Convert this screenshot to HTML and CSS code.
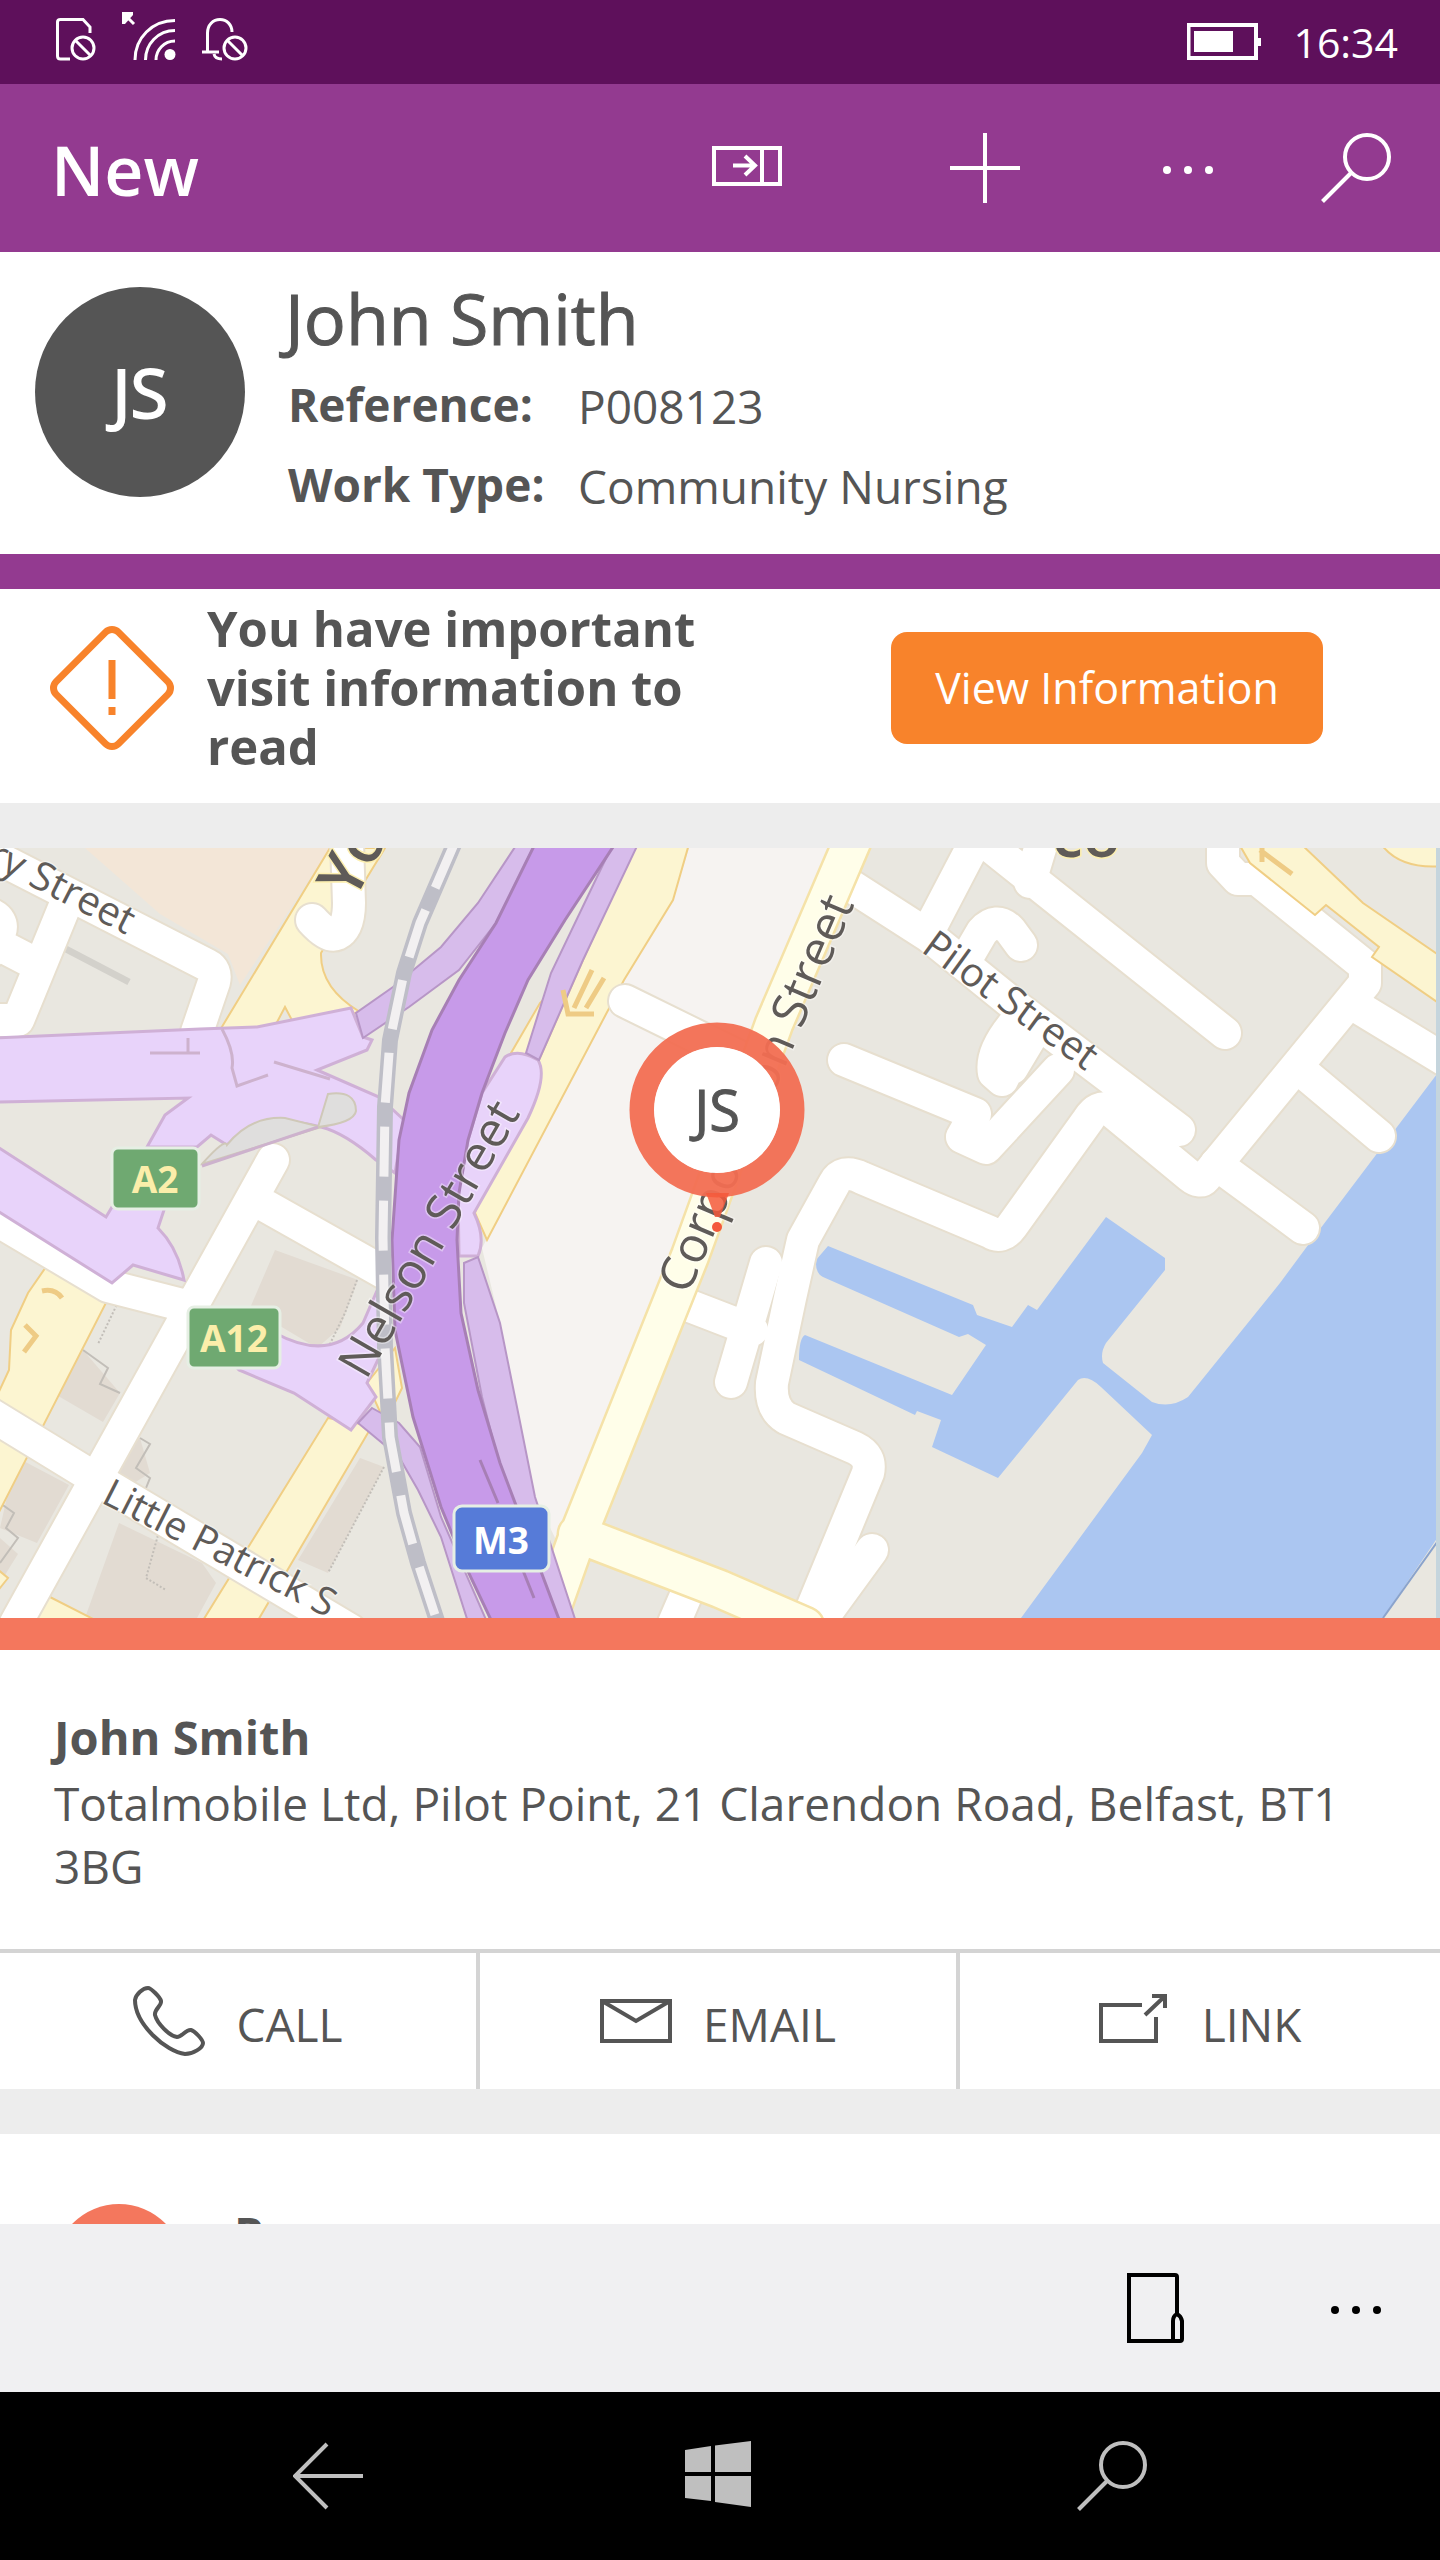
FILE: index.html
```html
<!DOCTYPE html>
<html lang="en">
<head>
<meta charset="UTF-8">
<meta name="viewport" content="width=device-width, initial-scale=1.0">
<link rel="stylesheet" href="styles.css">
<title>New</title>
</head>
<body>
<div class="status-bar">
  <div class="status-icons">
    <svg width="40" height="50" viewBox="0 0 40 50">
      <path class="line" d="M14 43H4.500Q1.500 43 1.500 40V6Q1.500 3.500 4.500 3.500H27L34 11V17"/>
      <circle class="line" cx="27" cy="32" r="11"/>
      <path class="line" d="M19 24L35 40"/>
    </svg>
    <svg width="54" height="50" viewBox="0 0 54 50">
      <path class="line" d="M2 -2L12 8" stroke-width="4"/>
      <path class="solid" d="M0 -4H11V-1L3 8H0Z"/>
      <path class="line" d="M13 44C13 22 30 4.500 53 4.500M23.500 44C23.500 28 36 14.500 53 14.500M34 44C34 34 42 25 53 25"/>
      <circle class="solid" cx="48" cy="38.500" r="5.500"/>
    </svg>
    <svg width="48" height="50" viewBox="0 0 48 50">
      <path class="line" d="M5.500 36V17C5.500 9 11 3.500 18 3.500C25 3.500 30 9 30 16M0 36H17M12 38Q13 43 20 43"/>
      <circle class="line" cx="33" cy="32" r="11"/>
      <path class="line" d="M25 24L41 40"/>
    </svg>
  </div>
  <div class="status-right">
    <svg width="74" height="38" viewBox="0 0 74 38">
      <path class="line" d="M1.500 2H69V35H1.500Z"/>
      <path class="solid" d="M7 8H46V29H7ZM70 15H74V23H70Z"/>
    </svg>
    <span class="clock">16:34</span>
  </div>
</div>

<header class="app-bar">
  <h1>New</h1>
  <div class="app-actions">
    <button type="button" aria-label="Open pane">
      <svg width="70" height="70" viewBox="0 0 70 70">
        <path class="line" d="M2 15H68V51H2ZM50 15V51M21 32.500H43M33 23L43 32.500L33 42"/>
      </svg>
    </button>
    <button type="button" aria-label="Add">
      <svg width="70" height="70" viewBox="0 0 70 70"><path class="line" d="M35 0V70M0 35H70"/></svg>
    </button>
    <button type="button" aria-label="More">
      <svg width="50" height="70" viewBox="0 0 50 70">
        <circle class="solid" cx="4" cy="37" r="4"/><circle class="solid" cx="25" cy="37" r="4"/><circle class="solid" cx="46" cy="37" r="4"/>
      </svg>
    </button>
    <button type="button" aria-label="Search">
      <svg width="70" height="70" viewBox="0 0 70 70"><circle class="line" cx="46" cy="24" r="22"/><path class="line" d="M30 40L1.500 68.500"/></svg>
    </button>
  </div>
</header>

<main class="content">
  <section class="profile">
    <div class="avatar">JS</div>
    <div class="profile-info">
      <h2>John Smith</h2>
      <dl>
        <dt>Reference:</dt><dd>P008123</dd>
        <dt>Work Type:</dt><dd>Community Nursing</dd>
      </dl>
    </div>
  </section>

  <section class="alert">
    <svg class="alert-icon" width="128" height="128" viewBox="0 0 128 128">
      <rect x="20" y="20" width="88" height="88" rx="9" transform="rotate(45 64 64)"/>
      <path d="M64 36V75M64 83V91"/>
    </svg>
    <p>You have important visit information to read</p>
    <button type="button" class="view-button">View Information</button>
  </section>

  <section class="map">
    <svg viewBox="0 0 1440 770" role="img" aria-label="Map">
      <defs>
        <g id="roads">
          <path d="M-10 6L207 117Q217 122 214 134L197 184"/>
          <path d="M64 60L18 172H-10M-10 66Q4 72 0 84L-10 104M40 118L-10 92"/>
          <path d="M-10 368L108 438L186 458M273 312L16 775M255 352L390 428M-10 566L88 626L350 782"/>
          <path d="M625 153L745 212"/>
          <path d="M848 36L929 88L1018 160L1179 282M975 -6L928 84M985 -6L1225 185M1042 -6L1030 34"/>
          <path d="M968 108L982 84Q996 68 1010 82L1021 97M1014 176Q990 205 994 225L1002 232L1016 204M1030 190L1012 220M1058 222L986 300L962 289L975 266L844 212"/>
          <path d="M1223 -6V15L1238 31H1257L1365 118V135L1205 330Q1200 336 1190 328L1110 262Q1098 256 1088 272L1012 378Q1002 392 990 384L862 330Q842 320 834 336L803 392L790 450L772 535Q770 560 786 570L855 600Q872 608 868 625L806 775"/>
          <path d="M1216 316L1303 380M1298 220L1379 288M1356 158L1445 212"/>
          <path d="M766 415L731 534M682 455L752 482M872 702L824 768M687 745L674 775"/>
        </g>
        <path id="corporation" d="M852 -6L774 176L690 408L577 690L545 780M577 686L720 741L805 778"/>
      </defs>

      <rect class="land" width="1440" height="770"/>
      <path class="peach" d="M85 0H330L240 137L228 106L160 66Z"/>
      <path class="pale" d="M689 0H840L765 172L685 400L580 675L560 700L535 649L519 569L500 475L482 400L624 132L673 52Z"/>
      <path class="building" d="M275 402L358 432L340 480L317 500L250 460ZM83 502L120 545L103 574L53 545ZM360 610L384 619L328 725L298 712ZM119 675L202 715L216 735L197 770H85ZM16 609L69 637L37 695L0 680ZM140 590L150 625L110 650L125 600ZM0 690L18 706L0 735Z"/>
      <path class="outline" d="M83 502L108 520L100 536L120 545M140 590L150 596L136 620L150 630L146 640M0 655L14 665L6 680L18 690L0 715"/>
      <path class="outline dotted" d="M384 619L328 725M357 432L345 465L328 500M120 450L98 496M160 680L146 730L166 742"/>
      <path class="water" d="M1440 222L1317 385L1280 435L1188 549Q1170 561 1152 554L1103 515Q1100 505 1106 495L1165 422V410L1106 369L1037 462L1028 457L1012 479L977 467L973 457L828 398L816 412Q815 425 823 429L959 489L968 486L986 497L952 547L805 487Q799 490 799 512L915 567L917 563L941 572L932 599L998 630L1078 532Q1087 526 1101 539L1152 587L1142 605L1021 770H1383L1440 686Z"/>
      <path class="shore" d="M1440 690L1383 770"/>
      <path class="mark" d="M64 100L129 134"/>

      <!-- main roads -->
      <g class="yellow">
        <path d="M330 0L220 182L275 178L285 159L294 176L360 164Q320 140 321 105L385 0Z"/>
        <path d="M636 -4L583 112L539 212L505 225L475 365L487 392L624 132L673 52L689 -4ZM511 205L540 155L545 150L526 208Z"/>
        <path d="M48 416L110 447L-4 670V550L9 522L11 482L28 445ZM328 570L372 578L257 774H202ZM46 747L99 774H32ZM-4 720L8 730L-4 745Z"/>
        <path d="M367 535L395 500L402 540L385 575Z"/>
        <path d="M1381 -4Q1400 22 1444 18V-4Z"/>
      </g>
      <use href="#roads" class="casing"/>
      <use href="#roads" class="road"/>
      <path class="yellow" d="M1239 -4H1301L1363 55L1440 108V156L1372 109L1379 99L1326 57L1315 67L1250 15Z"/>
      <use href="#corporation" class="corp-casing"/>
      <use href="#corporation" class="corp"/>
      <path class="casing" d="M347 -6L349 55Q349 80 337 86Q328 90 312 72"/>
      <path class="road" d="M347 -6L349 55Q349 80 337 86Q328 90 312 72"/>

      <g class="lilac">
        <path d="M-4 190L200 181L257 179L351 160L363 189L372 192L367 202L317 222L379 249L404 272L395 325L376 312Q345 285 321 279Q260 262 227 297L211 287L197 299H147L165 267L188 250L-4 254Z"/>
        <path d="M-4 298L106 369L112 359H165L158 380Q178 400 184 432L133 417L112 435L-4 362Z"/>
        <path d="M239 460L275 485Q330 515 363 475L376 445L392 482L367 535L376 549L351 582L294 545L239 522L200 480Z"/>
        <path d="M505 209Q518 200 538 212Q548 228 528 270L474 365Q486 390 478 408H459L458 345L468 292L482 245Z"/>
      </g>
      <path class="island" d="M328 246Q356 242 356 263Q354 275 318 279ZM321 279L202 316Q225 290 227 297Q250 268 285 270Z"/>
      <path class="lilac-edge" d="M150 205H200M188 205V190M222 181Q235 205 232 220L237 238L268 227M274 214L330 231M202 318L318 279"/>
      <g class="ramp">
        <path d="M517 -4H535L496 75L459 122L409 159L363 190L356 165L393 139L441 99L478 55Z"/>
        <path d="M613 -4H638L583 112L539 212L526 205L551 125L597 29Z"/>
        <path d="M464 415L478 409L500 475L519 569L535 649L576 774H558L505 639L482 549L464 455Z"/>
        <path d="M372 560L399 575L420 599L441 669L487 774H468L441 689L418 642L399 609L358 575Z"/>
      </g>
      <path class="motorway" d="M535 -4L496 75L459 132L432 182L409 245L399 292L392 392L395 482L413 569L441 659L464 715L492 774H560L528 689L500 615L478 542L461 465L457 392L459 345L468 292L482 245L505 185L528 132L565 72L615 -4Z"/>
      <path class="motorway" d="M480 612L498 655M522 720L534 750"/>
      <path class="arrow" d="M563 142L568 166L594 166M592 122L574 160M604 130L586 160M1260 2L1292 26M1262 0V14M42 443Q55 440 62 450M25 477L36 488L24 504"/>
      <path class="rail" d="M455 -6L420 75L404 125L390 192L385 259L383 390L385 499L390 589L404 665L418 715L438 776"/>
      <path class="rail-dash" d="M455 -6L420 75L404 125L390 192L385 259L383 390L385 499L390 589L404 665L418 715L438 776"/>
      <rect class="map-edge" x="1436" width="4" height="770"/>

      <g class="label">
        <text class="label-town" transform="translate(354 54) rotate(-62)">Yo</text>
        <text class="label-town" x="1052" y="9">co</text>
        <text transform="translate(-15 15) rotate(27)">ry Street</text>
        <text transform="translate(920 103) rotate(36)">Pilot Street</text>
        <text class="label-small" transform="translate(100 654) rotate(27)">Little Patrick S</text>
        <text class="label-large" transform="translate(366 533) rotate(-60)">Nelson Street</text>
        <text class="label-large" transform="translate(688 448) rotate(-67)">Corporation Street</text>
      </g>

      <g class="shield shield-green">
        <rect x="112" y="300" width="87" height="61" rx="6"/><text x="155" y="345">A2</text>
        <rect x="188" y="459" width="92" height="61" rx="6"/><text x="234" y="504">A12</text>
      </g>
      <g class="shield shield-blue">
        <rect x="454" y="658" width="95" height="65" rx="8"/><text x="501" y="706">M3</text>
      </g>

      <g class="pin">
        <circle class="pin-ring" cx="717" cy="262" r="75"/>
        <path class="pin-tip" d="M706 345H729L720 369H715Z"/>
        <circle cx="717" cy="379" r="5"/>
        <circle class="pin-face" cx="717" cy="262" r="63"/>
        <text x="717" y="283">JS</text>
      </g>
    </svg>
  </section>

  <section class="address">
    <h3>John Smith</h3>
    <p>Totalmobile Ltd, Pilot Point, 21 Clarendon Road, Belfast, BT1 3BG</p>
  </section>
  <nav class="contact">
    <a href="#call">
      <svg width="72" height="70" viewBox="0 0 72 70">
        <path class="line" d="M15 2C18 2 27 11 28 15C29 20 21 23 22 29C24 37 36 50 44 51C49 51 53 43 58 44C62 45 70 54 70 57C70 62 60 68 52 68C33 66 2 38 2 14C3 8 10 2 15 2Z"/>
      </svg>
      <span>CALL</span>
    </a>
    <a href="#email">
      <svg width="72" height="70" viewBox="0 0 72 70"><path class="line" d="M2 15H70V55H2ZM2 15L36 35L70 15"/></svg>
      <span>EMAIL</span>
    </a>
    <a href="#link">
      <svg width="72" height="70" viewBox="0 0 72 70"><path class="line" d="M43 19H2V55H57V31M46 29L65 11M53 10H66V22"/></svg>
      <span>LINK</span>
    </a>
  </nav>

  <section class="person">
    <span class="person-dot"></span>
    <h3>Person</h3>
  </section>
</main>

<div class="command-bar">
  <button type="button" aria-label="Notes">
    <svg width="58" height="70" viewBox="0 0 58 70">
      <path class="line" d="M50 40V4Q50 2 48 2H2V68H53Q55 68 55 66V48Q54 43 50 41Q46 43 46 48V67"/>
    </svg>
  </button>
  <button type="button" aria-label="More">
    <svg width="50" height="70" viewBox="0 0 50 70">
      <circle class="solid" cx="4" cy="37" r="4"/><circle class="solid" cx="25" cy="37" r="4"/><circle class="solid" cx="46" cy="37" r="4"/>
    </svg>
  </button>
</div>

<nav class="system-bar">
  <button type="button" aria-label="Back">
    <svg width="70" height="70" viewBox="0 0 70 70"><path class="line" d="M70 35H3M34 3L2 35L34 67"/></svg>
  </button>
  <button type="button" aria-label="Start">
    <svg width="70" height="70" viewBox="0 0 70 70"><path class="solid" d="M0 9L26 5V31H0ZM30 4.500L66 0V31H30ZM0 35H26V60L0 57ZM30 35H66V66L30 61Z"/></svg>
  </button>
  <button type="button" aria-label="Search">
    <svg width="70" height="70" viewBox="0 0 70 70"><circle class="line" cx="46" cy="24" r="22"/><path class="line" d="M30 40L1.500 68.500"/></svg>
  </button>
</nav>
</body>
</html>
```
FILE: styles.css
```css
* {
  box-sizing: border-box;
}
body {
  margin: 0;
  height: 100vh;
  display: flex;
  flex-direction: column;
  font-family: "Segoe UI", "Open Sans", sans-serif;
  font-size: 46px;
  line-height: 64px;
  color: #555555;
  background-color: #ffffff;
}
h1, h2, h3, p, dl, dd {
  margin: 0;
}
button {
  padding: 0;
  border: none;
  background: none;
  color: inherit;
  font: inherit;
  cursor: pointer;
}
svg {
  display: block;
}
.line {
  fill: none;
  stroke: currentColor;
  stroke-width: 4;
}
.solid {
  fill: currentColor;
}

/* top bars */
.status-bar {
  flex: none;
  display: flex;
  justify-content: space-between;
  align-items: center;
  height: 84px;
  padding: 0 42px 0 56px;
  color: #ffffff;
  background-color: #5e105b;
}
.status-icons {
  display: flex;
  gap: 26px;
}
.status-icons svg {
  margin-top: -2px;
  overflow: visible;
}
.status-icons .line {
  stroke-width: 3;
}
.status-right {
  display: flex;
  align-items: center;
  gap: 32px;
}
.clock {
  font-size: 41px;
}
.app-bar {
  flex: none;
  display: flex;
  justify-content: space-between;
  align-items: center;
  height: 168px;
  padding: 0 49px 0 51px;
  color: #ffffff;
  background-color: #933a90;
}
h1 {
  padding-top: 4px;
  font-size: 68px;
  font-weight: 600;
}
.app-actions {
  display: grid;
  grid-template-columns: 238px 213px 158px 70px;
}

/* profile */
.content {
  flex: 1;
  min-height: 0;
  overflow: hidden;
}
.profile {
  display: flex;
  gap: 40px;
  padding: 35px 35px 30px;
  border-bottom: 35px solid #933a90;
}
.avatar {
  flex: none;
  width: 210px;
  height: 210px;
  border-radius: 50%;
  background-color: #555555;
  color: #ffffff;
  font-size: 68px;
  line-height: 210px;
  text-align: center;
  -webkit-text-stroke: 2px;
}
h2 {
  font-size: 70px;
  font-weight: 400;
  line-height: 62px;
  -webkit-text-stroke: 1px;
}
dl {
  display: grid;
  grid-template-columns: 290px 1fr;
  padding-left: 3px;
  margin-top: 15px;
  line-height: 80px;
}
dt {
  font-size: 46px;
  font-weight: 700;
}
dd {
  padding-top: 4px;
  line-height: 76px;
}

/* alert */
.alert {
  display: flex;
  align-items: center;
  padding: 10px 117px 27px 48px;
  border-bottom: 45px solid #ededed;
}
.alert-icon {
  fill: none;
  stroke: #f8832b;
  stroke-width: 7;
}
.alert p {
  width: 520px;
  margin: 0 auto 0 31px;
  font-size: 49px;
  font-weight: 700;
  line-height: 59px;
}
.view-button {
  width: 432px;
  height: 112px;
  border-radius: 16px;
  background-color: #f8832b;
  color: #ffffff;
  font-size: 43px;
}

/* map */
.map {
  border-bottom: 32px solid #f4775d;
}
.land { fill: #e9e7e0; }
.peach { fill: #f3e6d7; }
.pale { fill: #f6f3f1; }
.building { fill: #e2dbd2; }
.water { fill: #abc6f1; }
.outline, .shore, .mark, .arrow {
  fill: none;
  stroke: #c2beb8;
  stroke-width: 2;
}
.dotted { stroke-dasharray: 2 2; }
.shore { stroke: #8aa3cc; }
.mark {
  stroke: #d3d1cb;
  stroke-width: 7;
}
.arrow {
  stroke: #eecb85;
  stroke-width: 5;
}
.yellow {
  fill: #fcf5d1;
  stroke: #f0ce84;
  stroke-width: 2;
}
.casing, .road, .corp, .corp-casing {
  fill: none;
  stroke-linecap: round;
  stroke-linejoin: round;
}
.casing {
  stroke: #e7dfcf;
  stroke-width: 36;
}
.road {
  stroke: #ffffff;
  stroke-width: 32;
}
.corp-casing {
  stroke: #f5e2a8;
  stroke-width: 41;
}
.corp {
  stroke: #fffee9;
  stroke-width: 36;
}
.lilac {
  fill: #e8d3fa;
  stroke: #cfb0d6;
  stroke-width: 3;
}
.lilac-edge {
  fill: none;
  stroke: #cdb2cd;
  stroke-width: 3;
}
.island {
  fill: #dfdedd;
  stroke: #cfc8b8;
  stroke-width: 2;
}
.ramp {
  fill: #d7bceb;
  stroke: #b796c6;
  stroke-width: 2;
}
.motorway {
  fill: #c79ae9;
  stroke: #a77fb5;
  stroke-width: 3;
}
.rail, .rail-dash {
  fill: none;
  stroke: #bebec7;
  stroke-width: 16;
}
.rail-dash {
  stroke: #f2f0f1;
  stroke-width: 9;
  stroke-dasharray: 50 24;
}
.map-edge { fill: #c5d5dd; }
.label {
  font-size: 40px;
  fill: #5f5b58;
  stroke: #ffffff;
  stroke-opacity: 0.4;
  stroke-width: 3;
  paint-order: stroke;
}
.label-small { font-size: 39px; }
.label-large { font-size: 49px; }
.label-town {
  font-size: 62px;
  font-weight: 600;
  stroke: #fcefb0;
  stroke-opacity: 1;
}
.shield {
  stroke: #e6efe4;
  stroke-width: 3;
  font-size: 37px;
  font-weight: 700;
  text-anchor: middle;
}
.shield text {
  stroke: none;
}
.shield-green rect { fill: #6fa971; }
.shield-green text { fill: #fbeeaa; }
.shield-blue rect { fill: #567bd8; }
.shield-blue text { fill: #ffffff; }
.pin {
  fill: #f4593b;
}
.pin-ring {
  fill: none;
  stroke: #f26e52;
  stroke-opacity: 0.95;
  stroke-width: 25;
}
.pin-tip { fill-opacity: 0.85; }
.pin-face { fill: #ffffff; }
.pin text {
  fill: #555555;
  stroke: #555555;
  stroke-width: 1;
  font-size: 56px;
  text-anchor: middle;
}

/* address and contact */
.address {
  padding: 52px 54px 51px;
}
h3 {
  font-size: 47px;
  font-weight: 700;
}
.address h3 {
  line-height: 70px;
}
.address p {
  line-height: 63px;
}
.contact {
  display: grid;
  grid-template-columns: 1fr 1fr 1fr;
  border-top: 4px solid #d4d4d4;
  border-bottom: 45px solid #ededed;
}
.contact a {
  display: flex;
  justify-content: center;
  align-items: center;
  gap: 31px;
  height: 136px;
  color: #555555;
  text-decoration: none;
}
.contact a:not(:last-child) {
  border-right: 4px solid #d4d4d4;
}
.contact span {
  padding-top: 6px;
}
.person {
  display: flex;
  gap: 50px;
  padding: 70px 54px;
}
.person h3 {
  line-height: 58px;
}
.person-dot {
  width: 130px;
  height: 130px;
  border-radius: 50%;
  background-color: #f4775d;
}

/* bottom bars */
.command-bar {
  flex: none;
  display: flex;
  justify-content: flex-end;
  align-items: center;
  gap: 146px;
  height: 168px;
  padding: 0 59px;
  color: #000000;
  background-color: #f0f0f2;
}
.system-bar {
  flex: none;
  display: flex;
  justify-content: space-between;
  align-items: center;
  height: 168px;
  padding: 0 293px;
  color: #bfbfbf;
  background-color: #000000;
}
```
